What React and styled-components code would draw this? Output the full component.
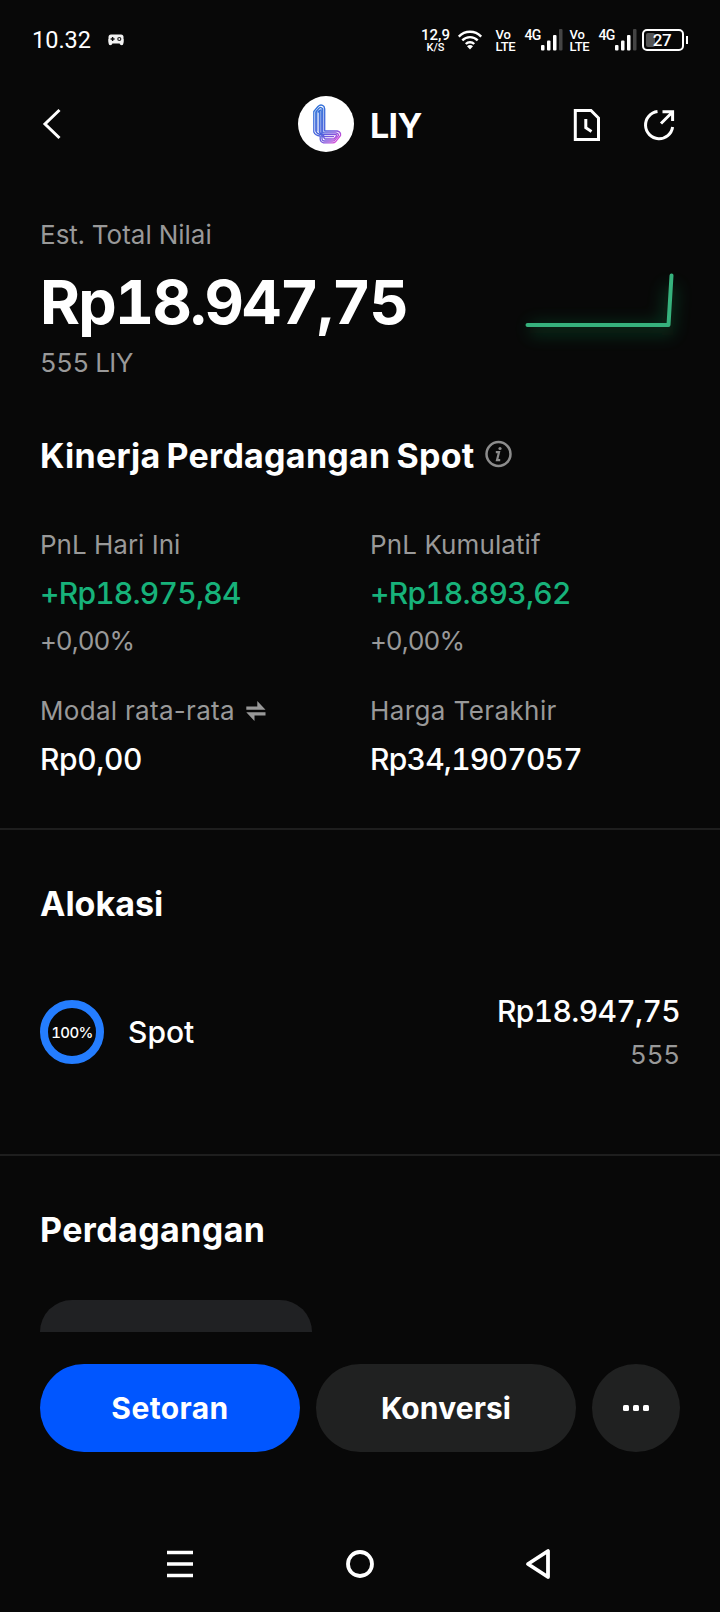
import React from "react";
import styled, { createGlobalStyle } from "styled-components";

const Global = createGlobalStyle`
  * { box-sizing: border-box; }
  body { margin: 0; background: #080808; }
  svg { display: block; flex: none; overflow: visible; }
`;

const Screen = styled.div`
  width: 720px;
  height: 1612px;
  display: flex;
  flex-direction: column;
  overflow: hidden;
  background: #080808;
  color: #fff;
  font-family: Inter, "Liberation Sans", sans-serif;
  font-variant-numeric: tabular-nums;
`;

const StatusBar = styled.div`
  height: 80px;
  flex: none;
  display: flex;
  align-items: center;
  padding: 0 32px 0 32px;
  font-family: Roboto, sans-serif;
  font-variant-numeric: normal;
`;

const Clock = styled.span`
  width: 76px;
  font-size: 23.5px;
  line-height: 28px;
`;

const StatusIcons = styled.div`
  margin-left: auto;
  display: flex;
  align-items: center;
`;

const Stack = styled.div`
  width: ${(p) => p.$width}px;
  display: flex;
  flex-direction: column;
  align-items: ${(p) => p.$align || "flex-start"};
  font-weight: 500;
`;

const Tiny = styled.span`
  font-size: ${(p) => p.$size}px;
  line-height: ${(p) => p.$line || 12}px;
  letter-spacing: ${(p) => p.$track || 0}px;
`;

const Network = styled.div`
  width: 45px;
  height: 22px;
  display: flex;
  align-items: flex-start;
  font-weight: 500;
`;

const NetworkLabel = styled.span`
  width: 16px;
  font-size: 14px;
  line-height: 13px;
  letter-spacing: -0.6px;
`;

const Battery = styled.div`
  width: 42px;
  height: 22px;
  margin-left: -1.5px;
  position: relative;
  display: flex;
  align-items: center;
  justify-content: center;
  border: 2px solid #fff;
  border-radius: 5px;
  font-size: 17px;
  font-weight: 500;
  line-height: 18px;
  letter-spacing: -0.3px;
`;

const BatteryLevel = styled.i`
  position: absolute;
  left: 2px;
  top: 2px;
  width: 9px;
  height: 14px;
  border-radius: 2px;
  background: #555;
`;

const BatteryValue = styled.span`
  position: relative;
  left: -1px;
`;

const BatteryTip = styled.i`
  width: 2px;
  height: 8px;
  margin-left: 2px;
  background: #fff;
`;

const Header = styled.header`
  height: 88px;
  flex: none;
  display: grid;
  grid-template-columns: 1fr auto 1fr;
  align-items: center;
  padding: 0 40px;
`;

const Coin = styled.div`
  display: flex;
  align-items: center;
  gap: 16px;
`;

const CoinName = styled.h1`
  margin: 0;
  width: 52px;
  font-size: 34px;
  line-height: 44px;
  font-weight: 660;
  letter-spacing: -0.6px;
  padding-top: 3px;
`;

const HeaderActions = styled.div`
  display: flex;
  justify-content: flex-end;
  gap: 40px;
  padding: 2px 5px 0 0;
`;

const Section = styled.section`
  flex: none;
  height: ${(p) => p.$height}px;
  padding: ${(p) => p.$top}px 40px 0;
  border-bottom: ${(p) => (p.$last ? "0" : "2px solid #1e1e1e")};
  overflow: hidden;
`;

const Label = styled.div`
  display: flex;
  align-items: center;
  gap: 11px;
  color: #999;
  font-size: 26px;
  line-height: ${(p) => p.$line || 36}px;
  font-variant-numeric: ${(p) => (p.$plain ? "normal" : "inherit")};
  letter-spacing: ${(p) => p.$track || 0}px;
`;

const Summary = styled.div`
  display: flex;
  justify-content: space-between;
  margin-bottom: 53px;
`;

const Total = styled.div`
  margin: 12px 0 6px;
  font-size: 61px;
  line-height: 74px;
  font-weight: 650;
  letter-spacing: -1.85px;
`;

const Heading = styled.h2`
  margin: 0;
  display: flex;
  align-items: center;
  gap: 10px;
  font-size: 34px;
  line-height: 44px;
  font-weight: 650;
  letter-spacing: ${(p) => p.$track || 0}px;
  word-spacing: -3.5px;
`;

const Stats = styled.div`
  display: grid;
  grid-template-columns: 330px 1fr;
  row-gap: 34px;
  margin-top: 49px;
`;

const Value = styled.div`
  font-size: 30px;
  line-height: ${(p) => p.$line || 60}px;
  font-weight: 550;
  color: ${(p) => (p.$gain ? "#17b27a" : "#fff")};
  letter-spacing: ${(p) => (p.$track === undefined ? -0.75 : p.$track)}px;
`;

const Allocation = styled.div`
  display: flex;
  align-items: center;
  margin-top: 63px;
`;

const Ring = styled.div`
  width: 64px;
  height: 64px;
  margin-right: 24px;
  display: flex;
  align-items: center;
  justify-content: center;
  border: 8px solid #247dff;
  border-radius: 50%;
  font-size: 15px;
  font-weight: 550;
  letter-spacing: -0.6px;
`;

const Amount = styled.div`
  height: 86px;
  margin-left: auto;
  display: flex;
  flex-direction: column;
  align-items: flex-end;
`;

const Chip = styled.div`
  width: 272px;
  height: 64px;
  margin-top: 48px;
  border-radius: 32px;
  background: #202123;
`;

const Actions = styled.div`
  flex: none;
  display: grid;
  grid-template-columns: 260px 260px 88px;
  gap: 16px;
  padding: 32px 40px 0;
`;

const Button = styled.button`
  height: 88px;
  padding: 0;
  display: flex;
  align-items: center;
  justify-content: center;
  border: 0;
  border-radius: 44px;
  background: ${(p) => (p.$primary ? "#0056ff" : "#202121")};
  color: #fff;
  font-family: inherit;
  font-size: 30px;
  font-weight: 650;
  letter-spacing: ${(p) => p.$track || 0}px;
`;

const NavBar = styled.nav`
  height: 96px;
  margin-top: auto;
  flex: none;
  display: grid;
  grid-template-columns: repeat(3, 180px);
  justify-content: center;
  justify-items: center;
  align-items: center;
`;

const Gamepad = () => (
  <svg width="16" height="12" viewBox="0 0 16 12">
    <rect x=".5" y=".5" width="15" height="9" rx="2.500" fill="#f2f2f2" />
    <path d="M.5 5h5L4 10.500Q1 12.500.5 9ZM15.500 5h-5L12 10.500q3 2 3.500-1.500Z" fill="#f2f2f2" />
    <path d="M4.600 3v4M2.600 5h4" stroke="#111" strokeWidth="1.400" />
    <circle cx="11.300" cy="5" r="1.500" fill="none" stroke="#222" strokeWidth="1.200" />
  </svg>
);

const Wifi = () => (
  <svg width="24" height="20" viewBox="0 0 24 20" fill="none" stroke="#fff" strokeWidth="2.400">
    <path d="M.8 6.600C7 .2 17 .2 23.200 6.600M4.300 10.400c4.300-4.400 11.100-4.400 15.400 0M7.800 14c2.300-2.400 6.100-2.400 8.400 0" />
    <path d="M9 16.200c1.700-1.500 4.300-1.500 6 0L12 19.600Z" fill="#fff" stroke="none" />
  </svg>
);

const Bars = () => (
  <svg width="22" height="22" viewBox="0 0 22 22" fill="#fff">
    <rect x="0" y="16" width="3.500" height="5.500" rx="1" />
    <rect x="6" y="11.500" width="3.500" height="10" rx="1" />
    <rect x="12" y="6" width="3.500" height="15.500" rx="1" />
    <rect x="18" y="0" width="3.500" height="21.500" rx="1" fill="#444" />
  </svg>
);

const Sim = () => (
  <>
    <Stack $width={29}>
      <Tiny $size={13} $line={13}>Vo</Tiny>
      <Tiny $size={13} $line={12} $track={-0.3}>LTE</Tiny>
    </Stack>
    <Network>
      <NetworkLabel>4G</NetworkLabel>
      <Bars />
    </Network>
  </>
);

const Back = () => (
  <svg width="24" height="32" viewBox="0 0 24 32" fill="none" stroke="#fff" strokeWidth="3">
    <path d="M19.500 2 5 16l14.500 14" />
  </svg>
);

const CoinLogo = () => (
  <svg width="56" height="56" viewBox="0 0 56 56">
    <defs>
      <linearGradient id="coin" gradientUnits="userSpaceOnUse" x1="17" y1="14" x2="43" y2="44">
        <stop offset="0" stopColor="#2f6fd8" />
        <stop offset=".55" stopColor="#4a62dc" />
        <stop offset=".8" stopColor="#8a52dc" />
        <stop offset="1" stopColor="#ee50d8" />
      </linearGradient>
    </defs>
    <circle cx="28" cy="28" r="28" fill="#fff" />
    <g fill="none" stroke="url(#coin)" strokeWidth="1.300" strokeLinejoin="round">
      <path d="M15.800 15.500 20 10.500q3-3 6 0l.7 2.500V35h12.500q4 1 3.300 4.500l-5 6.300q-1 1-2.500 1H25.500q-3-.5-3.300-3.500V40q-5-.5-6.400-4Z" />
      <path d="M17.800 16 21 12.300q2-1.800 3.800.5V36.800h13q3 .7 2.600 2.900l-3.800 4.600q-.8.700-2 .7H26q-1.800-.3-2-2V38.500q-5 0-6.200-3.500Z" />
      <path d="M19.800 16.500 21.700 14.200q1-.8 1.300.8V38.500h14.500q1.500.3 1 1.500l-2.500 3H27q-1.500-.5-1.500-4.500" />
      <path d="M18.800 15v20.500M21.300 14v22q1 2.500 4 2.800M24 12.500V40.700h12" />
    </g>
  </svg>
);

const History = () => (
  <svg width="32" height="36" viewBox="0 0 32 36" fill="none" stroke="#fff" strokeWidth="3">
    <path d="M4.300 3.500H20L27.500 11v21.500H4.300ZM14.800 12v8.800L20.500 24.500" />
  </svg>
);

const Share = () => (
  <svg width="32" height="36" viewBox="0 0 32 36" fill="none" stroke="#fff" strokeWidth="3">
    <path d="M14.500 4.600A13.600 13.600 0 1 0 29.600 20M18 16.500 29 5.500M19.500 4.700H29.600V14" />
  </svg>
);

const Trend = styled.svg`
  height: 110px;
  margin-top: 41px;
  margin-bottom: -20px;
`;

const Sparkline = () => (
  <Trend width="190" height="110" viewBox="0 0 190 110" fill="none">
    <defs>
      <filter id="glow" x="-20%" y="-80%" width="140%" height="280%">
        <feGaussianBlur stdDeviation="8" />
      </filter>
    </defs>
    <path d="M40 71H177L181 28" stroke="#0d7d43" strokeWidth="13" opacity=".32" filter="url(#glow)" />
    <path d="M37.500 67H178.500L181.500 17.500" stroke="#36b27d" strokeWidth="4" strokeLinecap="round" strokeLinejoin="round" />
  </Trend>
);

const Info = () => (
  <svg width="28" height="28" viewBox="0 0 28 28" fill="none" stroke="#8c8c8c" strokeWidth="2.500">
    <circle cx="13.500" cy="12" r="12" />
    <path d="M10.800 10.200h3.200l-2 8h3.200" strokeWidth="2.200" />
    <circle cx="15" cy="6.500" r="1.600" fill="#8c8c8c" stroke="none" />
  </svg>
);

const Swap = () => (
  <svg width="20" height="20" viewBox="0 0 20 20" fill="#999">
    <path d="M.3 8.800V5.600H11.300V0L19.500 8.800ZM19.500 11.200v3.200H8.500V20L.3 11.200Z" />
  </svg>
);

const More = () => (
  <svg width="26" height="6" viewBox="0 0 26 6" fill="#fff">
    <rect width="6" height="6" rx="1.500" />
    <rect x="10" width="6" height="6" rx="1.500" />
    <rect x="20" width="6" height="6" rx="1.500" />
  </svg>
);

const Stat = ({ label, value, change, gain, icon, labelTrack, track }) => (
  <div>
    <Label $plain $track={labelTrack}>{label}{icon}</Label>
    <Value $gain={gain} $track={track}>{value}</Value>
    {change && <Label $track={-1}>{change}</Label>}
  </div>
);

export default function App() {
  return (
    <Screen>
      <Global />
      <StatusBar>
        <Clock>10.32</Clock>
        <Gamepad />
        <StatusIcons>
          <Stack $width={44} $align="center">
            <Tiny $size={15} $line={14}>12,9</Tiny>
            <Tiny $size={11} $line={11}>K/S</Tiny>
          </Stack>
          <Wifi />
          <Stack $width={14} />
          <Sim />
          <Sim />
          <Battery><BatteryLevel /><BatteryValue>27</BatteryValue></Battery>
          <BatteryTip />
        </StatusIcons>
      </StatusBar>
      <Header>
        <Back />
        <Coin>
          <CoinLogo />
          <CoinName>LIY</CoinName>
        </Coin>
        <HeaderActions>
          <History />
          <Share />
        </HeaderActions>
      </Header>
      <Section $height={662} $top={49}>
        <Summary>
          <div>
            <Label>Est. Total Nilai</Label>
            <Total>Rp18.947,75</Total>
            <Label $track={-0.6}>555 LIY</Label>
          </div>
          <Sparkline />
        </Summary>
        <Heading $track={0.28}>Kinerja Perdagangan Spot<Info /></Heading>
        <Stats>
          <Stat label="PnL Hari Ini" value="+Rp18.975,84" change="+0,00%" gain />
          <Stat label="PnL Kumulatif" value="+Rp18.893,62" change="+0,00%" labelTrack={0.1} gain />
          <Stat label="Modal rata-rata" value="Rp0,00" labelTrack={0.3} track={-0.4} icon={<Swap />} />
          <Stat label="Harga Terakhir" value="Rp34,1907057" labelTrack={0.4} />
        </Stats>
      </Section>
      <Section $height={326} $top={52}>
        <Heading>Alokasi</Heading>
        <Allocation>
          <Ring>100%</Ring>
          <Value $track={0}>Spot</Value>
          <Amount>
            <Value $line={44} $track={-0.65}>Rp18.947,75</Value>
            <Label $line={44} $track={-0.2}>555</Label>
          </Amount>
        </Allocation>
      </Section>
      <Section $height={176} $top={52} $last>
        <Heading $track={0.4}>Perdagangan</Heading>
        <Chip />
      </Section>
      <Actions>
        <Button $primary $track={0.4}>Setoran</Button>
        <Button $track={0.1}>Konversi</Button>
        <Button aria-label="Lainnya"><More /></Button>
      </Actions>
      <NavBar>
        <svg width="28" height="28" viewBox="0 0 28 28" stroke="#fff" strokeWidth="3.400">
          <path d="M1 2.500h26M1 14h26M1 25.500h26" />
        </svg>
        <svg width="28" height="28" viewBox="0 0 28 28" fill="none" stroke="#fff" strokeWidth="3.800">
          <circle cx="14" cy="14" r="12" />
        </svg>
        <svg width="32" height="32" viewBox="0 0 32 32" fill="none" stroke="#fff" strokeWidth="3.800" strokeLinejoin="round">
          <path d="M24 3v26L4 16Z" />
        </svg>
      </NavBar>
    </Screen>
  );
}
